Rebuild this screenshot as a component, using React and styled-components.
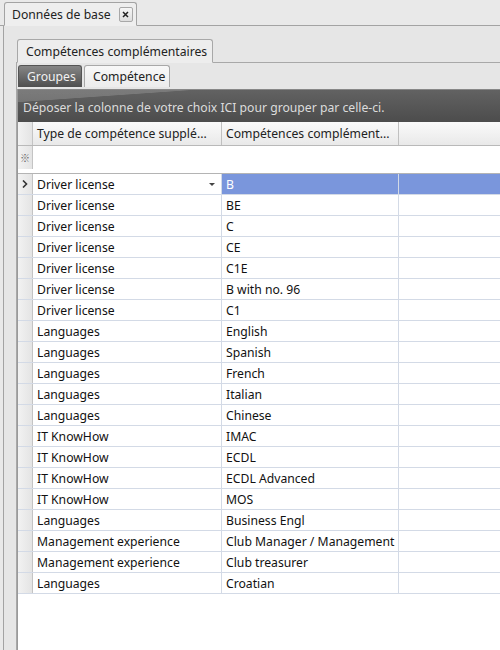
import React from "react";
import styled, { createGlobalStyle } from "styled-components";

const GlobalStyle = createGlobalStyle`
  html, body {
    margin: 0;
    padding: 0;
    background: #e9e9e9;
  }
`;

const Page = styled.div`
  width: 500px;
  height: 650px;
  display: flex;
  flex-direction: column;
  overflow: hidden;
  background: #e9e9e9;
  font-family: "Noto Sans", "Liberation Sans", Arial, sans-serif;
  font-size: 12.2px;
  color: #111;
`;

const TopStrip = styled.div`
  display: flex;
  align-items: flex-end;
  height: 25px;
  padding-left: 4px;
  border-bottom: 1px solid #a3a3a3;
  flex-shrink: 0;
`;

const MainTab = styled.div`
  display: flex;
  align-items: center;
  gap: 8px;
  height: 22px;
  padding: 0 3px 0 7px;
  margin-bottom: -1px;
  background: #eeeeee;
  border: 1px solid #a3a3a3;
  border-bottom-color: #eeeeee;
  border-radius: 3px 3px 0 0;
  color: #222;
`;

const CloseBox = styled.span`
  display: flex;
  align-items: center;
  justify-content: center;
  width: 12px;
  height: 13px;
  border: 1px solid #a8a8a8;
  border-radius: 2px;
  background: linear-gradient(#f6f6f6, #dedede);
`;

const OuterPanel = styled.div`
  flex: 1;
  display: flex;
  flex-direction: column;
  margin-left: 3px;
  border-left: 1px solid #a3a3a3;
  padding: 13px 0 0 12px;
  background: #e6e6e6;
  min-height: 0;
`;

const InnerTabStrip = styled.div`
  display: flex;
  height: 23px;
  padding-left: 1px;
  border-bottom: 1px solid #a8a8a8;
  flex-shrink: 0;
`;

const InnerTab = styled.div`
  display: flex;
  align-items: center;
  padding: 0 8px 0 8px;
  width: 196px;
  box-sizing: border-box;
  margin-bottom: -1px;
  background: #ededed;
  border: 1px solid #a8a8a8;
  border-bottom-color: #ededed;
  border-radius: 3px 3px 0 0;
  color: #222;
  white-space: nowrap;
`;

const InnerPanel = styled.div`
  flex: 1;
  display: flex;
  flex-direction: column;
  border-left: 1px solid #a8a8a8;
  min-height: 0;
`;

const SubTabs = styled.div`
  display: flex;
  gap: 2px;
  padding: 2px 0 0 1px;
  height: 22px;
  flex-shrink: 0;
`;

const SubTab = styled.div`
  display: flex;
  align-items: center;
  box-sizing: border-box;
  width: ${(p) => p.$w}px;
  padding-left: 8px;
  border-radius: 3px 3px 0 0;
  border: 1px solid ${(p) => (p.$active ? "#555" : "#a8a8a8")};
  border-bottom: none;
  background: ${(p) =>
    p.$active ? "linear-gradient(#868686, #4f4f4f)" : "linear-gradient(#f8f8f8, #ececec)"};
  color: ${(p) => (p.$active ? "#f2f2f2" : "#222")};
`;

const Grid = styled.div`
  flex: 1;
  display: flex;
  flex-direction: column;
  margin-top: 2px;
  background: #fff;
  border-left: 1px solid #9a9a9a;
  min-height: 0;
`;

const GroupPanel = styled.div`
  height: 33px;
  display: flex;
  align-items: flex-end;
  padding: 0 0 6px 5px;
  box-sizing: border-box;
  color: #dcdcdc;
  background:
    linear-gradient(176deg, rgba(255,255,255,0.16) 0 18%, rgba(255,255,255,0) 19%),
    linear-gradient(#626262, #4c4c4c);
  border-top: 1px solid #888;
  flex-shrink: 0;
  white-space: nowrap;
`;

const Row = styled.div`
  display: grid;
  grid-template-columns: 15px 189px 177px 1fr;
  height: ${(p) => p.$h || 21}px;
  box-sizing: border-box;
  border-bottom: 1px solid ${(p) => p.$line || "#d3dae6"};
  flex-shrink: 0;
`;

const HeaderRow = styled(Row)`
  background: linear-gradient(#fafafa, #e9e9e9);
  border-bottom-color: #b9b9b9;
`;

const Indicator = styled.div`
  display: flex;
  align-items: center;
  justify-content: center;
  background: linear-gradient(90deg, #f2f2f2, #e4e4e4);
  border-right: 1px solid #c4c4c4;
  color: #666;
  font-family: "Noto Sans CJK JP", "DejaVu Sans", sans-serif;
  font-size: 10px;
`;

const Cell = styled.div`
  display: flex;
  align-items: center;
  justify-content: space-between;
  padding: 0 6px 0 4px;
  overflow: hidden;
  white-space: nowrap;
  border-right: 1px solid ${(p) => p.$line || "#d3dae6"};
  background: ${(p) => (p.$selected ? "#7a96dc" : "transparent")};
  color: ${(p) => (p.$selected ? "#fff" : "#111")};
`;

const HeadCell = styled(Cell)`
  border-right-color: #c0c0c0;
  color: #222;
`;

const Filler = styled.div`
  background: ${(p) => (p.$selected ? "#7a96dc" : "transparent")};
`;

const Separator = styled.div`
  height: 3px;
  border-bottom: 1px solid #b4b4b4;
  background: #fff;
  flex-shrink: 0;
`;

const Arrow = styled.span`
  width: 0;
  height: 0;
  border-left: 3px solid transparent;
  border-right: 3px solid transparent;
  border-top: 3px solid #444;
`;

const rows = [
  ["Driver license", "B"],
  ["Driver license", "BE"],
  ["Driver license", "C"],
  ["Driver license", "CE"],
  ["Driver license", "C1E"],
  ["Driver license", "B with no. 96"],
  ["Driver license", "C1"],
  ["Languages", "English"],
  ["Languages", "Spanish"],
  ["Languages", "French"],
  ["Languages", "Italian"],
  ["Languages", "Chinese"],
  ["IT KnowHow", "IMAC"],
  ["IT KnowHow", "ECDL"],
  ["IT KnowHow", "ECDL Advanced"],
  ["IT KnowHow", "MOS"],
  ["Languages", "Business Engl"],
  ["Management experience", "Club Manager / Management"],
  ["Management experience", "Club treasurer"],
  ["Languages", "Croatian"],
];

const Chevron = () => (
  <svg width="6" height="8" viewBox="0 0 6 8">
    <path d="M1 0.5 L4.5 4 L1 7.5" fill="none" stroke="#333" strokeWidth="1.6" />
  </svg>
);

export default function App() {
  return (
    <Page>
      <GlobalStyle />
      <TopStrip>
        <MainTab>
          Données de base
          <CloseBox>
            <svg width="7" height="7" viewBox="0 0 7 7">
              <path d="M1 1 L6 6 M6 1 L1 6" stroke="#222" strokeWidth="1.5" />
            </svg>
          </CloseBox>
        </MainTab>
      </TopStrip>
      <OuterPanel>
        <InnerTabStrip>
          <InnerTab>Compétences complémentaires</InnerTab>
        </InnerTabStrip>
        <InnerPanel>
          <SubTabs>
            <SubTab $active $w={64}>Groupes</SubTab>
            <SubTab $w={86}>Compétence</SubTab>
          </SubTabs>
          <Grid>
            <GroupPanel>Déposer la colonne de votre choix ICI pour grouper par celle-ci.</GroupPanel>
            <HeaderRow $h={24}>
              <Indicator />
              <HeadCell>Type de compétence supplé...</HeadCell>
              <HeadCell>Compétences complément...</HeadCell>
              <Filler />
            </HeaderRow>
            <Row $h={24} $line="#fff">
              <Indicator>※</Indicator>
              <Cell $line="#fff" />
              <Cell $line="#fff" />
              <Filler />
            </Row>
            <Separator />
            {rows.map(([type, skill], i) => (
              <Row key={i}>
                <Indicator>{i === 0 && <Chevron />}</Indicator>
                <Cell>
                  {type}
                  {i === 0 && <Arrow />}
                </Cell>
                <Cell $selected={i === 0} $line={i === 0 ? "#d3dae6" : undefined}>
                  {skill}
                </Cell>
                <Filler $selected={i === 0} />
              </Row>
            ))}
          </Grid>
        </InnerPanel>
      </OuterPanel>
    </Page>
  );
}
